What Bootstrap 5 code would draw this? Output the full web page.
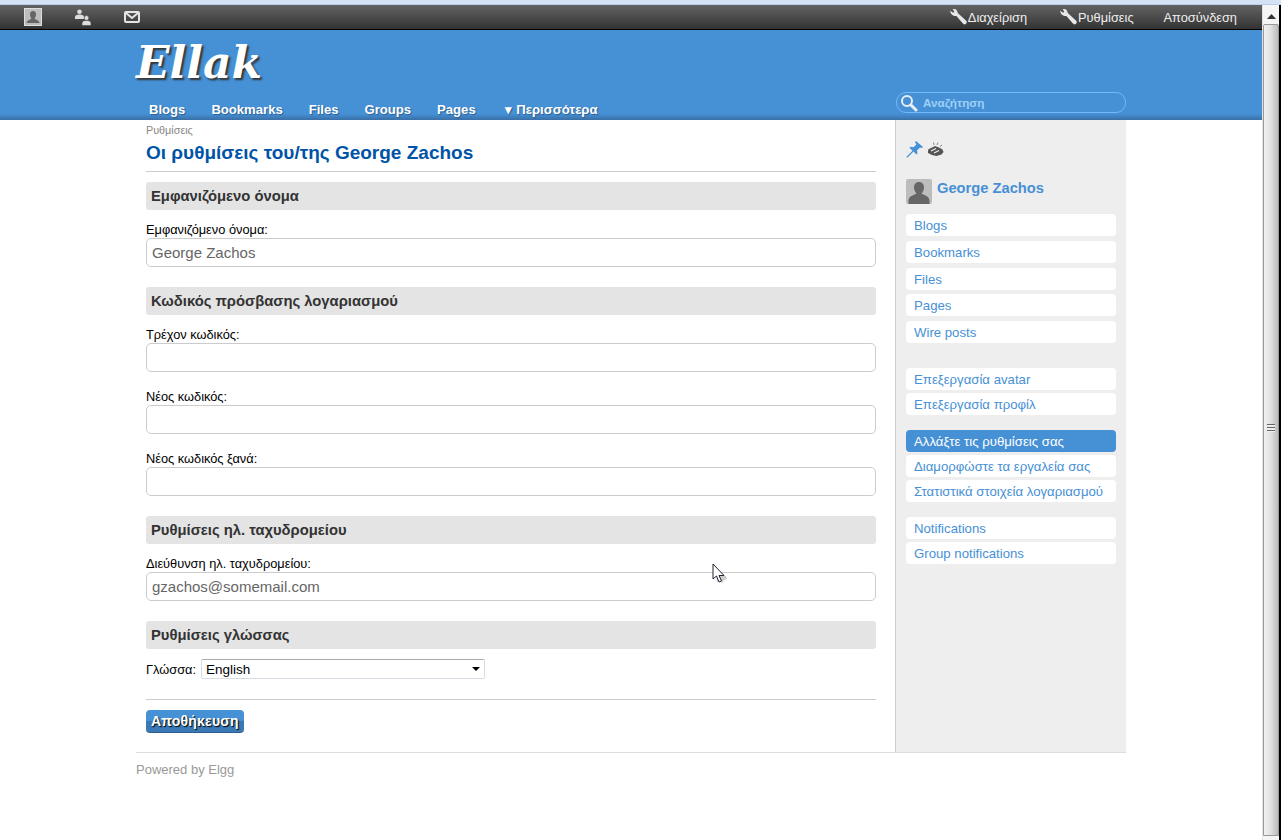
<!DOCTYPE html>
<html lang="el">
<head>
    <meta charset="UTF-8">
    <meta name="viewport" content="width=device-width, initial-scale=1.0">
    <title>Οι ρυθμίσεις του/της George Zachos</title>
    <link href="https://cdn.jsdelivr.net/npm/bootstrap@5.3.0/dist/css/bootstrap.min.css" rel="stylesheet">
    <style>
        html, body { height: 840px; overflow: hidden; }
        body { font-family: "Liberation Sans", Arial, sans-serif; font-size: 12px; color: #000; background: #fff; }
        .top-strip { height: 5px; background: #d3e2f5; border-bottom: 1px solid #b9cfe9; }
        .app-frame { height: 835px; position: relative; }
        .page-col { width: 1262px; flex: none; }
        .wrap-990 { width: 990px; margin-left: 136px; }

        /* barra superior */
        .topbar { height: 25px; background: linear-gradient(#636363, #333); border-bottom: 1px solid #000; color: #eee; font-size: 12.8px; }
        .topbar-icon { display: block; }
        .topbar-left { padding-left: 24px; gap: 32px; }
        .topbar-right { padding-right: 25px; padding-top: 1px; gap: 30px; }
        .topbar-link { color: #eee; text-decoration: none; display: flex; align-items: center; }
        .wrench-icon { margin-left: 2px; }

        /* cabecera */
        .site-head { height: 90px; background: linear-gradient(#4690d6 0, #4690d6 84px, #3a6fa5 90px); position: relative; }
        .site-name { font-family: "DejaVu Serif", serif; font-style: italic; font-weight: 700; font-size: 44px; line-height: 56px; color: #fff; text-shadow: 2px 2px 2px #333; padding-top: 5px; height: 63px; }
        .main-menu { padding-left: 13px; gap: 26px; height: 27px; padding-top: 9px; font-size: 13.1px; font-weight: 700; }
        .main-menu a { color: #fff; text-decoration: none; text-shadow: 1px 1px 1px #2a5f94; line-height: 15px; }
        .main-menu .more-link { margin-left: 3px; word-spacing: 1px; }
        .search-pill { width: 230px; height: 21px; border: 1px solid #71b9f7; border-radius: 10px; margin-top: -28px; margin-left: 760px; display: flex; align-items: center; padding-left: 3px; color: #9fd0f5; font-weight: 700; font-size: 11.7px; gap: 5px; position: relative; }

        /* contenido */
        .body-row { height: 633px; border-bottom: 1px solid #dedede; width: 990px; }
        .main-col { width: 759px; padding: 5px 19px 0 10px; flex: none; }
        .crumb { font-size: 10.8px; line-height: 10px; color: #888; height: 12px; }
        .page-title { font-size: 19px; font-weight: 700; color: #0054a7; line-height: 22px; margin: 5px 0 0; border-bottom: 1px solid #ccc; height: 30px; }
        .mod-head { background: #e4e4e4; border-radius: 3px; height: 28px; padding: 0 5px; font-size: 14.8px; font-weight: 700; color: #333; line-height: 28px; margin: 20px 0 0; }
        .mod-head.is-first { margin-top: 10px; }
        .field-label { font-size: 12.8px; line-height: 17px; display: block; margin: 11px 0 0; color: #000; }
        .field-label.is-next { margin-top: 16px; }
        .field-input.form-control { height: 29px; border: 1px solid #ccc; border-radius: 5px; padding: 0 5px; font-size: 15px; color: #666; font-family: inherit; box-shadow: none; }
        .lang-row { margin-top: 10px; gap: 5px; }
        .lang-row .field-label { margin: 0; }
        .lang-select.form-select { width: 284px; height: 20px; padding: 1px 4px 0; font-size: 13.5px; line-height: 18px; border: 1px solid #d8dbe2; border-top-color: #aaa; border-radius: 2px; color: #000; background-image: url("data:image/svg+xml,%3Csvg xmlns='http://www.w3.org/2000/svg' width='8' height='4'%3E%3Cpath d='M0 0h8L4 4z' fill='%23000'/%3E%3C/svg%3E"); background-size: 8px 4px; background-position: right 4px center; }
        .form-rule { margin: 20px 0 0; border-color: #ccc; opacity: 1; }
        .save-btn.btn { background: linear-gradient(#4690d6 0, #4690d6 50%, #3a78b6 50%, #3a78b6 100%); color: #fff; font-size: 14px; font-weight: 700; border: 0; border-bottom: 1px solid #2f5f90; border-radius: 4px; padding: 0 5px; height: 23px; line-height: 22px; text-shadow: 1px 1px 1px #000; letter-spacing: .2px; margin-top: 10px; }

        /* lateral */
        .side-col { width: 231px; background: #eee; border-left: 1px solid #ccc; padding: 19px 10px 0; flex: none; }
        .side-tools { height: 20px; }
        .side-owner { gap: 5px; margin: 20px 0 10px; }
        .side-name { font-size: 14.7px; font-weight: 700; color: #4690d6; line-height: 18px; }
        .side-group { gap: 3px; margin-bottom: 15px; }
        .side-group.wide-gap { gap: 4.75px; margin-bottom: 25px; }
        .side-link { display: block; background: #fff; border-radius: 4px; height: 22px; line-height: 23px; padding-left: 8px; color: #4690d6; font-size: 13.2px; text-decoration: none; white-space: nowrap; }
        .side-link.is-on { background: #4690d6; color: #fff; }

        .powered { color: #999; font-size: 13px; line-height: 14px; padding-top: 10px; }

        /* barra de scroll */
        .scroll-col { width: 17px; flex: none; background: #f5f5f5; border-left: 1px solid #e2e2e2; position: relative; }
        .scroll-up { height: 18px; display: flex; align-items: center; justify-content: center; padding-top: 4px; }
        .scroll-thumb { position: absolute; left: 0; right: 0; top: 19px; bottom: 0; margin-bottom: 4px; border: 1px solid #999; border-radius: 2px 2px 0 0; background: linear-gradient(90deg, #f0f0f0, #e2e2e2 45%, #bbb); }
        .scroll-grip { position: absolute; left: 3px; top: 399px; width: 8px; height: 8px; background: repeating-linear-gradient(#666 0, #666 1px, #eee 1px, #eee 3px); }
        .edge-col { width: 2px; background: #000; flex: none; }
        .mouse-pointer { position: absolute; left: 712px; top: 558px; }
    </style>
</head>
<body>
    <div class="top-strip"></div>
    <div class="app-frame d-flex">
        <div class="page-col">
            <!-- Barra superior -->
            <div class="topbar d-flex justify-content-between align-items-center">
                <div class="topbar-left d-flex align-items-center">
                    <svg class="topbar-icon" width="18" height="18" viewBox="0 0 18 18"><rect x=".5" y=".5" width="17" height="17" fill="#bdbdbd" stroke="#ddd"/><path d="M9 3c2 0 3 1.500 3 3.500S11 10 10.500 10.700c1.500 1 4.500 1.500 5 4.300H2.500c.5-2.800 3.500-3.300 5-4.300C7 10 6 8.500 6 6.500S7 3 9 3z" fill="#666"/></svg>
                    <svg class="topbar-icon" width="18" height="17" viewBox="0 0 18 17"><circle cx="5.500" cy="2.800" r="2.300" fill="#ddd"/><path d="M1 10V8c0-1.500 1.500-2.500 4.500-2.500S10 6.500 10 8v2z" fill="#ddd"/><circle cx="12.500" cy="9" r="2.400" fill="#ddd" stroke="#444" stroke-width=".6"/><path d="M8 16.500v-2.500c0-1.500 1.500-2.600 4.500-2.600S17 12.500 17 14v2.500z" fill="#ddd" stroke="#444" stroke-width=".6"/></svg>
                    <svg class="topbar-icon" width="16" height="12" viewBox="0 0 16 12"><rect x="1" y="1" width="14" height="10" rx="1" fill="none" stroke="#e4e4e4" stroke-width="2"/><path d="M2 2l6 5 6-5" fill="none" stroke="#e4e4e4" stroke-width="2"/></svg>
                </div>
                <div class="topbar-right d-flex align-items-center">
                    <a class="topbar-link" href="#"><svg class="wrench-icon" width="19" height="17" viewBox="0 0 18 16"><path d="M1 1.500l3 2 1-1-1.500-2.500c2-.5 4 .5 4.500 2.500l.3 1.300 8 7.200c1 1 .5 2.200-.3 3s-2 .8-2.800-.2L7 6.500C4.500 7 1.500 5 1 1.500z" fill="#e8e8e8"/></svg>Διαχείριση</a>
                    <a class="topbar-link" href="#"><svg class="wrench-icon" width="19" height="17" viewBox="0 0 18 16"><path d="M1 1.500l3 2 1-1-1.500-2.500c2-.5 4 .5 4.500 2.500l.3 1.300 8 7.200c1 1 .5 2.200-.3 3s-2 .8-2.800-.2L7 6.500C4.500 7 1.500 5 1 1.500z" fill="#e8e8e8"/></svg>Ρυθμίσεις</a>
                    <a class="topbar-link" href="#">Αποσύνδεση</a>
                </div>
            </div>

            <!-- Cabecera -->
            <div class="site-head">
                <div class="wrap-990">
                    <div class="site-name">Ellak</div>
                    <div class="main-menu d-flex">
                        <a href="#">Blogs</a>
                        <a href="#">Bookmarks</a>
                        <a href="#">Files</a>
                        <a href="#">Groups</a>
                        <a href="#">Pages</a>
                        <a class="more-link" href="#">▾ Περισσότερα</a>
                    </div>
                    <div class="search-pill">
                        <svg width="18" height="18" viewBox="0 0 18 18"><circle cx="7" cy="7" r="5" fill="none" stroke="#e8eef5" stroke-width="2"/><path d="M11 11l5 5" stroke="#e8eef5" stroke-width="3" stroke-linecap="round"/></svg>
                        <span>Αναζήτηση</span>
                    </div>
                </div>
            </div>

            <!-- Contenido -->
            <div class="wrap-990">
                <div class="body-row d-flex">
                    <div class="main-col">
                        <div class="crumb">Ρυθμίσεις</div>
                        <h1 class="page-title">Οι ρυθμίσεις του/της George Zachos</h1>

                        <form>
                            <h3 class="mod-head is-first">Εμφανιζόμενο όνομα</h3>
                            <label class="field-label">Εμφανιζόμενο όνομα:</label>
                            <input class="form-control field-input" value="George Zachos">

                            <h3 class="mod-head">Κωδικός πρόσβασης λογαριασμού</h3>
                            <label class="field-label">Τρέχον κωδικός:</label>
                            <input class="form-control field-input">
                            <label class="field-label is-next">Νέος κωδικός:</label>
                            <input class="form-control field-input">
                            <label class="field-label is-next">Νέος κωδικός ξανά:</label>
                            <input class="form-control field-input">

                            <h3 class="mod-head">Ρυθμίσεις ηλ. ταχυδρομείου</h3>
                            <label class="field-label">Διεύθυνση ηλ. ταχυδρομείου:</label>
                            <input class="form-control field-input" value="gzachos@somemail.com">

                            <h3 class="mod-head">Ρυθμίσεις γλώσσας</h3>
                            <div class="lang-row d-flex align-items-center">
                                <label class="field-label">Γλώσσα:</label>
                                <select class="form-select lang-select"><option>English</option></select>
                            </div>
                            <hr class="form-rule">
                            <button type="button" class="btn save-btn">Αποθήκευση</button>
                        </form>
                    </div>

                    <div class="side-col">
                        <div class="side-tools d-flex align-items-center gap-1">
                            <svg width="17" height="17" viewBox="0 0 17 17"><path d="M10 0l7 6-1.500 1-1.500-.5-3 3 .5 3-1 1-3-3-6 6-1 0 0-.8 6-6-3-3 1-1 3 .5 3-3L9 1.500z" fill="#4690d6"/></svg>
                            <svg width="17" height="15" viewBox="0 0 17 15"><path d="M1 8.500C1 7 3 6.500 5 5.500l3-1.500 4 1.500 3.500 2 1 2.500-2 2.500-5 1.500-4.500-1L1 11z" fill="#555"/><path d="M4 9l5-2.500M7 11l5-2.500" stroke="#eee" stroke-width="1.200"/><path d="M7 3L6.500 .5M10 3l1-2.500M13 4.500l2-1.500" stroke="#888"/></svg>
                        </div>
                        <div class="side-owner d-flex align-items-start">
                            <svg width="26" height="25" viewBox="0 0 26 25"><rect width="26" height="25" rx="2" fill="#bdbdbd"/><path d="M13 3c3.500 0 5 2.500 5 5.500s-1.500 5-2.500 6c2 1.500 7 2 8 6.500v4H2.500v-4c1-4.500 6-5 8-6.500-1-1-2.500-3-2.500-6S9.500 3 13 3z" fill="#666"/></svg>
                            <span class="side-name">George Zachos</span>
                        </div>
                        <div class="side-group wide-gap d-flex flex-column">
                            <a class="side-link" href="#">Blogs</a>
                            <a class="side-link" href="#">Bookmarks</a>
                            <a class="side-link" href="#">Files</a>
                            <a class="side-link" href="#">Pages</a>
                            <a class="side-link" href="#">Wire posts</a>
                        </div>
                        <div class="side-group d-flex flex-column">
                            <a class="side-link" href="#">Επεξεργασία avatar</a>
                            <a class="side-link" href="#">Επεξεργασία προφίλ</a>
                        </div>
                        <div class="side-group d-flex flex-column">
                            <a class="side-link is-on" href="#">Αλλάξτε τις ρυθμίσεις σας</a>
                            <a class="side-link" href="#">Διαμορφώστε τα εργαλεία σας</a>
                            <a class="side-link" href="#">Στατιστικά στοιχεία λογαριασμού</a>
                        </div>
                        <div class="side-group d-flex flex-column">
                            <a class="side-link" href="#">Notifications</a>
                            <a class="side-link" href="#">Group notifications</a>
                        </div>
                    </div>
                </div>
                <div class="powered">Powered by Elgg</div>
            </div>
        </div>

        <!-- Barra de scroll del navegador -->
        <div class="scroll-col">
            <div class="scroll-up"><svg width="9" height="5" viewBox="0 0 9 5"><path d="M0 5l4.500-5L9 5z" fill="#333"/></svg></div>
            <div class="scroll-thumb"><div class="scroll-grip"></div></div>
        </div>
        <div class="edge-col"></div>

        <svg class="mouse-pointer" width="16" height="22" viewBox="0 0 16 22"><path d="M3 4l9 9h2l1 3-3 1-2 3-2-3-3 2z" fill="#999" opacity=".5"/><path d="M1 1v15l3.500-3 2.500 6 2.500-1-2.500-5.500H12z" fill="#fff" stroke="#223" stroke-width="1"/></svg>
    </div>
    <script src="https://cdn.jsdelivr.net/npm/bootstrap@5.3.0/dist/js/bootstrap.bundle.min.js"></script>
</body>
</html>
